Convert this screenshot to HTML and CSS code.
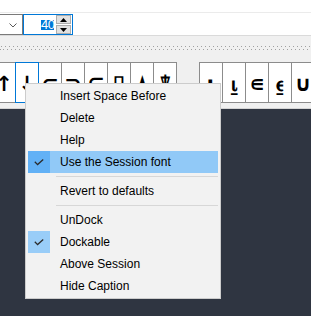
FILE: index.html
```html
<!DOCTYPE html>
<html>
<head>
<meta charset="utf-8">
<link rel="stylesheet" href="styles.css">
</head>
<body>
<div class="app">
  <div class="topband"></div>
  <div class="sep-light"></div>
  <div class="row1">
    <div class="combo">
      <svg class="chev" width="8" height="5" viewBox="0 0 8 5"><polyline points="0.5,0.5 4,4 7.5,0.5" fill="none" stroke="#5a5a5a" stroke-width="1"/></svg>
    </div>
    <div class="spinner">
      <span class="spin-val">40</span>
      <div class="spin-btns">
        <div class="spin-btn"><svg width="7" height="4" viewBox="0 0 7 4"><polygon points="0,4 3.5,0 7,4" fill="#000"/></svg></div>
        <div class="spin-btn"><svg width="7" height="4" viewBox="0 0 7 4"><polygon points="0,0 3.5,4 7,0" fill="#000"/></svg></div>
      </div>
    </div>
  </div>
  <div class="sep-mid"></div>
  <div class="grip">
    <div class="dots"></div>
    <div class="dots dots2"></div>
  </div>
  <div class="langbar">
    <div class="group g1">
      <div class="cell">↑</div>
      <div class="cell hover">↓</div>
      <div class="cell">⊂</div>
      <div class="cell">⊃</div>
      <div class="cell">⊆</div>
      <div class="cell">⌷</div>
      <div class="cell">⍋</div>
      <div class="cell">⍒</div>
    </div>
    <div class="group g2">
      <div class="cell">⍳</div>
      <div class="cell">⍸</div>
      <div class="cell">∊</div>
      <div class="cell">⍷</div>
      <div class="cell">∪</div>
    </div>
  </div>
  <div class="strip"></div>
  <div class="strip-line"></div>
  <div class="session"></div>

  <div class="menu">
    <div class="item"><span class="chk"></span><span class="lbl">Insert Space Before</span></div>
    <div class="item"><span class="chk"></span><span class="lbl">Delete</span></div>
    <div class="item"><span class="chk"></span><span class="lbl">Help</span></div>
    <div class="item active checked"><span class="chk"><svg width="10" height="7" viewBox="0 0 10 7"><polyline points="0.8,2.8 3.6,5.6 9.2,0.6" fill="none" stroke="#2b2b2b" stroke-width="1.3"/></svg></span><span class="lbl">Use the Session font</span></div>
    <div class="msep"></div>
    <div class="item"><span class="chk"></span><span class="lbl">Revert to defaults</span></div>
    <div class="msep"></div>
    <div class="item"><span class="chk"></span><span class="lbl">UnDock</span></div>
    <div class="item checked"><span class="chk"><svg width="10" height="7" viewBox="0 0 10 7"><polyline points="0.8,2.8 3.6,5.6 9.2,0.6" fill="none" stroke="#2b2b2b" stroke-width="1.3"/></svg></span><span class="lbl">Dockable</span></div>
    <div class="item"><span class="chk"></span><span class="lbl">Above Session</span></div>
    <div class="item"><span class="chk"></span><span class="lbl">Hide Caption</span></div>
  </div>
</div>
</body>
</html>
```

FILE: styles.css
```css
html, body {
  margin: 0;
  padding: 0;
  background: #2f3541;
  overflow: hidden;
}
.app {
  position: relative;
  width: 311px;
  height: 316px;
  overflow: hidden;
  font-family: "Liberation Sans", Arial, sans-serif;
}
.topband {
  height: 12px;
  background: #ffffff;
}
.sep-light {
  height: 1px;
  background: #ebebeb;
}
.row1 {
  height: 22px;
  background: #ffffff;
  display: flex;
  align-items: flex-start;
  padding-top: 1px;
  box-sizing: border-box;
}
.combo {
  width: 43px;
  height: 21px;
  margin-left: -20px;
  box-sizing: border-box;
  border: 1px solid #7a7a7a;
  background: #fff;
  display: flex;
  align-items: center;
  justify-content: flex-end;
  padding-right: 5px;
}
.chev {
  display: block;
  margin-top: 1px;
}
.spinner {
  width: 50px;
  height: 21px;
  box-sizing: border-box;
  border: 1px solid #0078d7;
  background: #fff;
  display: flex;
  align-items: center;
  justify-content: flex-end;
  padding-right: 1px;
}
.spin-val {
  background: #0078d7;
  color: #fff;
  font-size: 13px;
  line-height: 10px;
  height: 10px;
  padding: 0 0 0 0;
  width: 13px;
  letter-spacing: -0.5px;
  margin-right: 2px;
  margin-top: 1px;
  overflow: visible;
}
.spin-btns {
  display: flex;
  flex-direction: column;
  gap: 1px;
}
.spin-btn {
  width: 15px;
  height: 9px;
  box-sizing: border-box;
  border: 1px solid #adadad;
  background: #e1e1e1;
  display: flex;
  align-items: center;
  justify-content: center;
}
.spin-btn svg {
  display: block;
}
.sep-mid {
  height: 1px;
  background: #dadada;
}
.grip {
  height: 26px;
  background: #f0f0f0;
  padding-top: 10px;
  box-sizing: border-box;
}
.dots {
  height: 1px;
  background-image: repeating-linear-gradient(to right, #a0a0a0 0 1px, transparent 1px 4px);
  background-position: 1px 0;
}
.dots2 {
  margin-top: 2px;
  background-position: 3px 0;
}
.langbar {
  height: 41px;
  background: #f0f0f0;
  display: flex;
  align-items: flex-start;
}
.group {
  display: flex;
  border: 1px solid #8c8c8c;
  border-right: none;
  background: #fff;
  height: 41px;
  box-sizing: border-box;
}
.g1 {
  margin-left: -8px;
}
.g2 {
  margin-left: 22px;
}
.cell {
  position: relative;
  width: 23px;
  height: 39px;
  box-sizing: border-box;
  border-right: 1px solid #8c8c8c;
  font-family: "DejaVu Sans", sans-serif;
  font-weight: bold;
  font-size: 21px;
  color: #000;
  display: flex;
  align-items: center;
  justify-content: center;
  padding-top: 2px;
}
.cell.hover::after {
  content: "";
  position: absolute;
  left: -1px;
  top: -1px;
  right: -1px;
  bottom: -1px;
  border: 1px solid #0078d7;
}
.strip {
  height: 5px;
  background: #f0f0f0;
}
.strip-line {
  height: 1px;
  background: #d4d4d4;
}
.session {
  height: 220px;
  background: #2f3541;
}
.menu {
  position: absolute;
  left: 25px;
  top: 83px;
  width: 196px;
  box-sizing: border-box;
  background: #f2f2f2;
  border: 1px solid #cccccc;
  padding: 1px 2px;
  font-size: 12px;
  color: #000;
}
.item {
  height: 22px;
  display: flex;
  align-items: center;
}
.chk {
  width: 22px;
  height: 22px;
  flex: none;
  display: flex;
  align-items: center;
  justify-content: center;
}
.lbl {
  padding-left: 10px;
  white-space: nowrap;
}
.item.active {
  background: #91c9f7;
}
.item.active .chk {
  background: #62b1f6;
}
.item.checked:not(.active) .chk {
  background: #99cdf8;
}
.msep {
  height: 1px;
  background: #d7d7d7;
  margin: 3px 0 3px 28px;
}
```
